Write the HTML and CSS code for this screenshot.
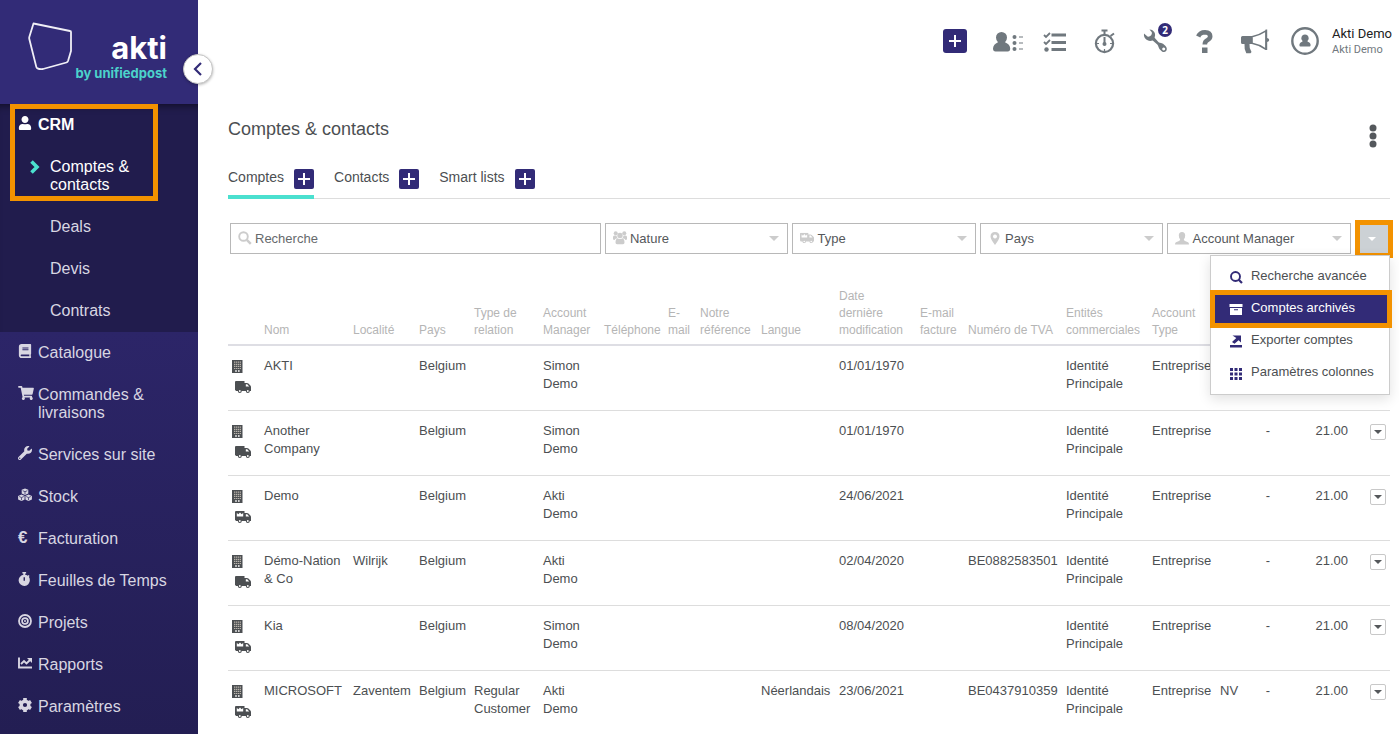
FILE: index.html
```html
<!DOCTYPE html>
<html lang="fr">
<head>
<meta charset="utf-8">
<title>Comptes &amp; contacts</title>
<link rel="stylesheet" href="styles.css">
</head>
<body>
<svg class="sprite" aria-hidden="true">
  <symbol id="building" viewBox="0 0 11 13"><path fill="currentColor" d="M0 0h10.500v13h-10.500z"/><path stroke="#b9b3aa" stroke-width="1.200" stroke-dasharray="1.300 .6" d="M2 2.200h7M2 4.300h7M2 6.400h7M2 8.500h7"/><path fill="#fff" d="M3.200 10.300h1.600v1.500H3.200zM6 10.300h1.600v1.500H6z"/></symbol>
  <symbol id="truck" viewBox="0 0 16 12"><path fill="currentColor" d="M1 0h8.500v2h2.500q.8 0 1.400.6l2 2q.6.600.6 1.400v4h-1.200a2 2 0 0 1-4 0h-4a2 2 0 0 1-4 0H.6V9H0V1q0-1 1-1z"/><path fill="#fff" d="M10.800 3.200h1.400l2 2.200h-3.400z"/><circle cx="4.800" cy="10" r=".9" fill="#fff"/><circle cx="12.800" cy="10" r=".9" fill="#fff"/></symbol>
  <symbol id="truck-crown" viewBox="0 0 16 12"><use href="#truck"/><path fill="#fff" d="M1.800 2l1.600 1.300L5 1.500l1.600 1.800L8.200 2v3.500H1.800z"/></symbol>
  <symbol id="wrench" viewBox="0 0 512 512"><path fill="currentColor" d="M507.730 109.100c-2.240-9.030-13.540-12.090-20.120-5.510l-74.360 74.360-67.880-11.310-11.310-67.880 74.360-74.360c6.620-6.620 3.430-17.900-5.660-20.160-47.380-11.740-99.550.91-136.580 37.930-39.640 39.640-50.550 97.100-34.050 147.200L18.740 402.760c-24.990 24.990-24.990 65.510 0 90.500 24.990 24.990 65.510 24.990 90.500 0l213.210-213.210c50.120 16.710 107.470 5.680 147.370-34.220 37.070-37.070 49.700-89.320 37.910-136.730zM64 472c-13.250 0-24-10.750-24-24 0-13.260 10.750-24 24-24s24 10.740 24 24c0 13.250-10.750 24-24 24z"/></symbol>
  <symbol id="plus" viewBox="0 0 20 20"><path stroke="#fff" stroke-width="2" d="M4 10h12M10 4v12"/></symbol>
</svg>

<div class="app">
  <aside class="sidebar">
    <header class="brand">
      <svg class="brand-mark" viewBox="0 0 46 50"><path fill="none" stroke="#f0eff6" stroke-width="1.800" stroke-linejoin="round" d="M5.500 1.500L42 9q1 0 1 1v19l-3 10q-.4 1-1.500 1.500L15 47q-3 .6-5.500-.6-1-.5-1.200-1.500L1.300 17q-.3-1 0-2z"/></svg>
      <div class="brand-text">
        <span class="brand-name">akti</span>
        <span class="brand-by">by unifiedpost</span>
      </div>
      <button class="collapse" aria-label="Réduire le menu"><svg viewBox="0 0 10 14"><path fill="none" stroke="#322b77" stroke-width="2.200" d="M8 1L2 7l6 6"/></svg></button>
    </header>
    <nav class="menu">
      <div class="group">
        <a class="item current" href="#"><svg class="ico" viewBox="0 0 448 512"><path fill="currentColor" d="M224 256c70.700 0 128-57.300 128-128S294.700 0 224 0 96 57.300 96 128s57.300 128 128 128zm89.600 32h-16.700c-22.200 10.200-46.900 16-72.900 16s-50.600-5.800-72.900-16h-16.700C60.200 288 0 348.200 0 422.400V464c0 26.500 21.500 48 48 48h352c26.500 0 48-21.500 48-48v-41.600c0-74.200-60.200-134.400-134.400-134.400z"/></svg>CRM</a>
        <a class="item sub active" href="#"><svg class="arrow" viewBox="0 0 10 14"><path fill="none" stroke="#4be0cf" stroke-width="3.600" d="M1.500 1.500L7 7l-5.500 5.500"/></svg>Comptes &amp; contacts</a>
        <a class="item sub" href="#">Deals</a>
        <a class="item sub" href="#">Devis</a>
        <a class="item sub" href="#">Contrats</a>
        <span class="mark mark-nav"></span>
      </div>
      <a class="item" href="#"><svg class="ico" viewBox="0 0 448 512"><path fill="currentColor" d="M448 360V24c0-13.300-10.700-24-24-24H96C43 0 0 43 0 96v320c0 53 43 96 96 96h328c13.300 0 24-10.700 24-24v-16c0-7.500-3.500-14.300-8.900-18.700-4.200-15.400-4.200-59.300 0-74.700 5.400-4.300 8.900-11.100 8.900-18.600zM128 134c0-3.300 2.700-6 6-6h212c3.300 0 6 2.700 6 6v20c0 3.300-2.700 6-6 6H134c-3.300 0-6-2.700-6-6v-20zm0 64c0-3.300 2.700-6 6-6h212c3.300 0 6 2.700 6 6v20c0 3.300-2.700 6-6 6H134c-3.300 0-6-2.700-6-6v-20zm253.400 250H96c-17.700 0-32-14.300-32-32 0-17.600 14.400-32 32-32h285.400c-1.900 17.100-1.900 46.900 0 64z"/></svg>Catalogue</a>
      <a class="item" href="#"><svg class="ico wide" viewBox="0 0 576 512"><path fill="currentColor" d="M528.120 301.319l47.273-208C578.806 78.301 567.391 64 551.990 64H159.208l-9.166-44.810C147.758 8.021 137.930 0 126.529 0H24C10.745 0 0 10.745 0 24v16c0 13.255 10.745 24 24 24h69.883l70.248 343.435C147.325 417.100 136 435.222 136 456c0 30.928 25.072 56 56 56s56-25.072 56-56c0-15.674-6.447-29.835-16.824-40h209.647C430.447 426.165 424 440.326 424 456c0 30.928 25.072 56 56 56s56-25.072 56-56c0-22.172-12.888-41.332-31.579-50.405l5.517-24.276c3.413-15.018-8.002-29.319-23.403-29.319H218.117l-6.545-32h293.145c11.206 0 20.920-7.754 23.403-18.681z"/></svg>Commandes &amp; livraisons</a>
      <a class="item" href="#"><svg class="ico"><use href="#wrench"/></svg>Services sur site</a>
      <a class="item" href="#"><svg class="ico" viewBox="0 0 14 13"><g fill="currentColor"><path d="M7 0l3.300 1.300v3.800L7 6.600 3.700 5.100V1.300z"/><path d="M3.500 5.900l3.400 1.500v3.700L3.500 12.600.1 11.100V7.400z"/><path d="M10.500 5.900l3.400 1.500v3.700l-3.400 1.500-3.400-1.500V7.400z"/></g><path fill="none" stroke="#28225f" stroke-width=".7" d="M4.700 2.200L7 3.200l2.300-1M1.200 8l2.300 1.100L5.800 8M8.200 8l2.300 1.100L12.800 8M7 3.200v2.600M3.500 9.100v2.600M10.500 9.100v2.600M7 7v5"/></svg>Stock</a>
      <a class="item" href="#"><span class="ico euro">€</span>Facturation</a>
      <a class="item" href="#"><svg class="ico" viewBox="0 0 14 15"><path fill="currentColor" d="M4.200 0h4v1.700h-1v1.200q1.500.2 2.700 1.100l.9-.9 1.200 1.200-.9.900q1.100 1.600 1.100 3.700a6 6 0 1 1-7-5.900V1.700h-1z"/><path stroke="#27215b" stroke-width="1.500" d="M6.200 5.500v4"/></svg>Feuilles de Temps</a>
      <a class="item" href="#"><svg class="ico" viewBox="0 0 14 14"><g fill="none" stroke="currentColor"><circle cx="7" cy="7" r="6" stroke-width="1.800"/><circle cx="7" cy="7" r="2.900" stroke-width="1.700"/></g><circle cx="7" cy="7" r="1" fill="currentColor"/></svg>Projets</a>
      <a class="item" href="#"><svg class="ico" viewBox="0 0 14 14"><path fill="none" stroke="currentColor" stroke-width="1.900" d="M1 1.500v10h13M3 8l3-3 2.500 2.500L12 4"/><path fill="currentColor" d="M9 2h5v5z"/></svg>Rapports</a>
      <a class="item" href="#"><svg class="ico" viewBox="0 0 14 14"><circle cx="7" cy="7" r="3.800" fill="none" stroke="currentColor" stroke-width="3.400"/><path stroke="currentColor" stroke-width="3.600" d="M7 0v3M7 11v3M1 3.500L3.500 5M10.500 9l2.500 1.500M1 10.500L3.500 9M10.500 5L13 3.500"/></svg>Paramètres</a>
    </nav>
  </aside>

  <main class="main">
    <div class="topbar">
      <button class="tool" aria-label="Ajouter"><span class="plus big"><svg><use href="#plus"/></svg></span></button>
      <button class="tool" aria-label="Contacts"><svg width="36" height="24" viewBox="0 0 36 24"><path fill="currentColor" d="M14.500 3a5.500 5.500 0 0 1 5.500 5.500q0 3-2 4.800 5 2 5.200 6.200 0 3-2.500 3H8.500q-2.500 0-2.500-3 .3-4.200 5-6.200-2-1.800-2-4.800A5.500 5.500 0 0 1 14.500 3z"/><g fill="currentColor"><circle cx="27.500" cy="8" r="2"/><circle cx="27.500" cy="14" r="2"/><circle cx="27.500" cy="20" r="2"/></g><path stroke="currentColor" stroke-width="1.200" d="M32 8h4M32 14h4M32 20h4"/></svg></button>
      <button class="tool" aria-label="Tâches"><svg width="24" height="24" viewBox="0 0 24 24"><path stroke="currentColor" stroke-width="3.200" d="M8.500 6h14.500M8.500 13.500h14.500M8.500 20.500h14.500"/><path fill="none" stroke="currentColor" stroke-width="1.800" d="M1 6l2 2 4-4M1 13l2 2 4-4"/><circle cx="3.500" cy="20.500" r="2.200" fill="currentColor"/></svg></button>
      <button class="tool" aria-label="Chronomètre"><svg width="22" height="26" viewBox="0 0 22 26"><g fill="none" stroke="currentColor"><circle cx="10.500" cy="15.500" r="8.600" stroke-width="2.200"/><path stroke-width="2" d="M7.500 2.500h6M10.500 2.500v4M16.500 8l3.500-2.500M10.500 9v7"/><path stroke-width="1.200" d="M10.500 21v3M2 15.500h3M16 15.500h3"/></g><circle cx="10.500" cy="16" r="2" fill="currentColor"/></svg></button>
      <button class="tool" aria-label="Interventions, 2"><svg width="26" height="26" viewBox="0 0 26 26"><path fill="currentColor" fill-rule="evenodd" d="M7.500 1.500q4 .3 5.300 3.600.8 2-.2 4.600l4 4.600q1 .8 2.500.8 1.800 0 4.200 2.700 2.400 2.700 1 5-2 2.300-4.600.4-2.900-2.200-3.200-4.200-.2-1.600-1.200-2.600l-4.600-4q-3.500 1.300-6.500-.8-2.700-2.200-2.200-6l3.500 3q2.300.3 3.700-1.300 1-1.500.6-3zm14.200 18a1.500 1.500 0 1 0 .01 0z"/></svg><span class="badge">2</span></button>
      <button class="tool" aria-label="Aide"><svg width="18" height="24" viewBox="0 0 18 24"><path fill="none" stroke="currentColor" stroke-width="4.600" d="M2.200 7.500Q4 3.300 9 3.300q5.200.2 5.200 4 0 2.300-2.600 3.700-2.800 1.300-2.800 4.500"/><path fill="currentColor" d="M6 18.500h5.500V24H6z"/></svg></button>
      <button class="tool" aria-label="Annonces"><svg width="32" height="26" viewBox="0 0 32 26"><path fill="currentColor" d="M3.500 8H13v8h-2.500q-.5 4 2 8l-1 1.200H7.300Q5 21 5.500 16h-2Q2 16 2 14.500v-5Q2 8 3.500 8z"/><path fill="none" stroke="currentColor" stroke-width="1.600" stroke-linejoin="round" d="M13 8.800q7-1.500 14-6v18.500q-7-4.800-14-6z"/><path fill="currentColor" d="M26.500 1.500h1.700V10q2 .5 2 2t-2 2v8h-1.700z"/></svg></button>
      <button class="tool" aria-label="Profil"><svg width="30" height="30" viewBox="0 0 30 30"><circle cx="15" cy="15" r="12.700" fill="none" stroke="currentColor" stroke-width="2.400"/><path fill="currentColor" d="M15 8.500a3.600 3.600 0 0 1 2.600 6.200v1q3 .8 3 3.300 0 1.500-1 1.500h-9.200q-1 0-1-1.500 0-2.500 3-3.300v-1A3.600 3.600 0 0 1 15 8.500z"/></svg></button>
      <div class="user"><span class="user-name">Akti Demo</span><span class="user-org">Akti Demo</span></div>
    </div>

    <div class="heading">
      <h1>Comptes &amp; contacts</h1>
      <button class="kebab" aria-label="Plus d'options"><svg viewBox="0 0 8 24"><g fill="#54585c"><circle cx="4" cy="4" r="3.500"/><circle cx="4" cy="12" r="3.500"/><circle cx="4" cy="20" r="3.500"/></g></svg></button>
    </div>

    <div class="tabs">
      <div class="tab selected"><a href="#">Comptes</a><button class="plus" aria-label="Ajouter un compte"><svg><use href="#plus"/></svg></button></div>
      <div class="tab"><a href="#">Contacts</a><button class="plus" aria-label="Ajouter un contact"><svg><use href="#plus"/></svg></button></div>
      <div class="tab"><a href="#">Smart lists</a><button class="plus" aria-label="Ajouter une liste"><svg><use href="#plus"/></svg></button></div>
    </div>

    <form class="filters">
      <div class="field"><svg viewBox="0 0 14 14"><circle cx="5.500" cy="5.500" r="4.300" fill="none" stroke="currentColor" stroke-width="1.900"/><path stroke="currentColor" stroke-width="2.400" d="M8.800 8.800l4 4"/></svg><input type="text" placeholder="Recherche" aria-label="Recherche"></div>
      <div class="field drop"><svg viewBox="0 0 14 14"><g fill="currentColor"><circle cx="2.700" cy="2.300" r="2"/><circle cx="11.300" cy="2.300" r="2"/><circle cx="7" cy="4.500" r="2.700"/><path d="M0 8V6q0-1.500 1.500-1.500h2q.1 2 1.500 3H3Q2 8 1.500 9 0 9 0 8zM14 8V6q0-1.500-1.500-1.500h-2Q10.400 6.500 9 7.500h2q1 .500 1.500 1.500Q14 9 14 8z"/><path d="M2.500 11.500q0-4 2.500-4 2 1.200 4 0 2.500 0 2.500 4 0 1.700-1.500 1.700H4q-1.500 0-1.500-1.700z"/></g></svg><select aria-label="Nature"><option>Nature</option></select></div>
      <div class="field drop"><svg><use href="#truck-crown"/></svg><select aria-label="Type"><option>Type</option></select></div>
      <div class="field drop"><svg viewBox="0 0 14 14"><path fill="currentColor" fill-rule="evenodd" d="M7 1q4.500.2 4.500 4.500Q11.500 8 7 14 2.500 8 2.500 5.500 2.500 1.200 7 1zm0 2.600a2 2 0 1 0 .01 0z"/></svg><select aria-label="Pays"><option>Pays</option></select></div>
      <div class="field drop"><svg viewBox="0 0 14 14"><path fill="currentColor" d="M7 1q3.200 0 3.200 3.500Q10.200 7 8.800 8.300q0 1.200 1.200 1.700l3 1.200q1 .5 1 2.300H0q0-1.800 1-2.300L4 10q1.200-.5 1.200-1.700Q3.800 7 3.800 4.500 3.800 1 7 1z"/></svg><select aria-label="Account Manager"><option>Account Manager</option></select></div>
      <div class="more">
        <button type="button" class="more-btn" aria-label="Plus d'actions"><span class="caret"></span></button>
        <span class="mark mark-more"></span>
        <div class="popup">
          <a href="#"><svg viewBox="0 0 14 14"><circle cx="6.500" cy="6.500" r="4.500" fill="none" stroke="currentColor" stroke-width="1.900"/><path stroke="currentColor" stroke-width="2.200" d="M9.500 9.500l3.500 3.500"/></svg>Recherche avancée</a>
          <a href="#" class="hot"><svg viewBox="0 0 14 14"><path fill="currentColor" fill-rule="evenodd" d="M.5 2h13v3H.5zM1 6h12v7H1zm4 1.200v1.100h4V7.200z"/></svg>Comptes archivés<span class="mark mark-item"></span></a>
          <a href="#"><svg viewBox="0 0 14 14"><path fill="currentColor" d="M1 11h12v2.500H1zM3.500 1.500H12v7L9.600 6.200 5.500 9.800 3 8l4.300-4z"/></svg>Exporter comptes</a>
          <a href="#"><svg viewBox="0 0 14 14"><path fill="none" stroke="currentColor" stroke-width="3" stroke-dasharray="3 1.500" d="M1 3.500h12M1 8h12M1 12.500h12"/></svg>Paramètres colonnes</a>
        </div>
      </div>
    </form>

    <table class="grid">
      <colgroup><col class="c32"><col class="c89"><col class="c66"><col class="c55"><col class="c69"><col class="c61"><col class="c64"><col class="c32"><col class="c61"><col class="c78"><col class="c81"><col class="c48"><col class="c98"><col class="c86"><col class="c68"><col class="c44"><col class="c40"><col class="c52"><col class="c38"></colgroup>
      <thead><tr><th></th><th>Nom</th><th>Localité</th><th>Pays</th><th>Type de relation</th><th>Account Manager</th><th>Téléphone</th><th>E-mail</th><th>Notre référence</th><th>Langue</th><th>Date<br>dernière modification</th><th>E-mail facture</th><th>Numéro de TVA</th><th>Entités commerciales</th><th>Account Type</th><th></th><th></th><th></th><th></th></tr></thead>
      <tbody>
        <tr><td><span class="kinds"><svg class="bld"><use href="#building"/></svg><svg class="trk"><use href="#truck"/></svg></span></td><td>AKTI</td><td></td><td>Belgium</td><td></td><td>Simon Demo</td><td></td><td></td><td></td><td></td><td>01/01/1970</td><td></td><td></td><td>Identité Principale</td><td>Entreprise</td><td></td><td></td><td></td><td></td></tr>
        <tr><td><span class="kinds"><svg class="bld"><use href="#building"/></svg><svg class="trk"><use href="#truck"/></svg></span></td><td>Another Company</td><td></td><td>Belgium</td><td></td><td>Simon Demo</td><td></td><td></td><td></td><td></td><td>01/01/1970</td><td></td><td></td><td>Identité Principale</td><td>Entreprise</td><td></td><td class="dash">-</td><td class="num">21.00</td><td class="act"><button class="row-btn" aria-label="Actions"><span class="caret"></span></button></td></tr>
        <tr><td><span class="kinds"><svg class="bld"><use href="#building"/></svg><svg class="trk"><use href="#truck-crown"/></svg></span></td><td>Demo</td><td></td><td>Belgium</td><td></td><td>Akti<br>Demo</td><td></td><td></td><td></td><td></td><td>24/06/2021</td><td></td><td></td><td>Identité Principale</td><td>Entreprise</td><td></td><td class="dash">-</td><td class="num">21.00</td><td class="act"><button class="row-btn" aria-label="Actions"><span class="caret"></span></button></td></tr>
        <tr><td><span class="kinds"><svg class="bld"><use href="#building"/></svg><svg class="trk"><use href="#truck"/></svg></span></td><td>Démo-Nation &amp; Co</td><td>Wilrijk</td><td>Belgium</td><td></td><td>Akti<br>Demo</td><td></td><td></td><td></td><td></td><td>02/04/2020</td><td></td><td>BE0882583501</td><td>Identité Principale</td><td>Entreprise</td><td></td><td class="dash">-</td><td class="num">21.00</td><td class="act"><button class="row-btn" aria-label="Actions"><span class="caret"></span></button></td></tr>
        <tr><td><span class="kinds"><svg class="bld"><use href="#building"/></svg><svg class="trk"><use href="#truck-crown"/></svg></span></td><td>Kia</td><td></td><td>Belgium</td><td></td><td>Simon Demo</td><td></td><td></td><td></td><td></td><td>08/04/2020</td><td></td><td></td><td>Identité Principale</td><td>Entreprise</td><td></td><td class="dash">-</td><td class="num">21.00</td><td class="act"><button class="row-btn" aria-label="Actions"><span class="caret"></span></button></td></tr>
        <tr><td><span class="kinds"><svg class="bld"><use href="#building"/></svg><svg class="trk"><use href="#truck-crown"/></svg></span></td><td>MICROSOFT</td><td>Zaventem</td><td>Belgium</td><td>Regular Customer</td><td>Akti<br>Demo</td><td></td><td></td><td></td><td>Néerlandais</td><td>23/06/2021</td><td></td><td>BE0437910359</td><td>Identité Principale</td><td>Entreprise</td><td>NV</td><td class="dash">-</td><td class="num">21.00</td><td class="act"><button class="row-btn" aria-label="Actions"><span class="caret"></span></button></td></tr>
      </tbody>
    </table>
  </main>
</div>
</body>
</html>
```
FILE: styles.css
```css
* { box-sizing: border-box; }
body { margin: 0; height: 100vh; overflow: hidden; background: #fff; color: #4c4f52; font: 13px/18px "Liberation Sans", Arial, sans-serif; }
button { border: 0; padding: 0; background: none; font: inherit; color: inherit; }
a { color: inherit; text-decoration: none; }
svg { display: block; }
.sprite { position: absolute; width: 0; height: 0; }
.app { display: flex; height: 100%; }

/* Sidebar */
.sidebar { width: 198px; flex: none; display: flex; flex-direction: column; background: #2c2568; }
.brand { position: relative; z-index: 1; display: flex; height: 104px; padding: 22px 31px 0 28px; background: #322b77; }
.brand-mark { width: 46px; height: 50px; flex: none; }
.brand-text { flex: 1; display: flex; flex-direction: column; align-items: flex-end; padding-top: 9px; font-family: Inter, sans-serif; white-space: nowrap; }
.brand-name { font-size: 31px; line-height: 34px; font-weight: 700; color: #fff; }
.brand-by { font-size: 13px; line-height: 16px; font-weight: 700; color: #4cd3cb; }
.collapse { position: absolute; right: -15px; top: 54px; width: 30px; height: 30px; display: grid; place-items: center; border: 1px solid #c4c4c4; border-radius: 50%; background: #fff; box-shadow: 0 1px 3px rgba(0, 0, 0, .3); }
.collapse svg { width: 10px; height: 14px; }
.menu { flex: 1; background: linear-gradient(#211c4e 0, #2c2568 228px, #231e53 100%); font-size: 16px; color: #d8d6e2; }
.group { position: relative; background: #211c4d; box-shadow: inset 0 8px 8px -7px rgba(0, 0, 0, .6); }
.item { display: flex; align-items: flex-start; padding: 12px 20px 12px 18px; }
.ico { width: 14px; height: 14px; flex: none; margin-right: 6px; }
.ico.wide { width: 16px; margin-right: 4px; }
.euro { font-weight: 700; font-size: 17px; line-height: 16px; }
.current { font-weight: 700; color: #fff; }
.sub { padding-left: 50px; position: relative; }
.active { color: #fff; }
.arrow { position: absolute; left: 30px; top: 14px; width: 10px; height: 14px; }

/* Highlight frames */
.mark { position: absolute; border: 5px solid #f39200; pointer-events: none; }
.mark-nav { left: 10px; top: 0; width: 148px; height: 97px; z-index: 2; }
.mark-more { inset: -3px -3px -4px 0; }
.mark-item { inset: -5px -4px -5px -1px; }

/* Main */
.main { flex: 1; min-width: 0; padding: 0 9px 0 30px; }
.topbar { display: flex; justify-content: flex-end; align-items: center; height: 82px; margin-right: -2px; color: #70787e; }
.tool { position: relative; width: 50px; height: 50px; display: grid; place-items: center; }
.badge { position: absolute; right: 8px; top: 7px; width: 14px; height: 14px; border-radius: 50%; background: #322b77; color: #fff; font: 700 10px/14px "Open Sans", sans-serif; text-align: center; }
.user { display: flex; flex-direction: column; padding-left: 2px; font-family: Roboto, sans-serif; white-space: nowrap; }
.user-name { font-size: 13px; line-height: 17px; color: #222; }
.user-org { font-size: 11px; line-height: 16px; }
.plus { display: block; width: 20px; height: 20px; border-radius: 2px; background: #322b77; }
.plus svg { width: 20px; height: 20px; }
.plus.big { width: 24px; height: 24px; padding: 2px; border-radius: 3px; }
.heading { display: flex; justify-content: space-between; align-items: center; height: 30px; margin-top: 36px; padding-right: 13px; }
.heading h1 { margin: 0; padding-bottom: 8px; font-size: 18px; line-height: 22px; font-weight: 400; }
.kebab svg { width: 8px; height: 24px; }
.kebab { margin-top: 6px; }
.tabs { display: flex; gap: 20px; margin-top: 21px; border-bottom: 1px solid #ddd; }
.tab { display: flex; gap: 10px; height: 30px; margin-bottom: -1px; font-size: 14px; line-height: 16px; }
.selected { border-bottom: 4px solid #4be0cf; }
.filters { display: grid; grid-template-columns: 372fr repeat(4, 184fr) 35px; gap: 4px; margin: 24px 0 34px 2px; }
.field { position: relative; color: #ccc; }
.field > svg { position: absolute; left: 8px; top: 8px; width: 14px; height: 14px; pointer-events: none; }
.field input, .field select { display: block; width: 100%; height: 31px; padding: 0 24px; border: 1px solid #b8b8b8; border-radius: 0; background: #fff; color: #55585b; font: inherit; appearance: none; outline: 0; }
.field input::placeholder { color: #66696c; opacity: 1; }
.drop::after { content: ""; position: absolute; right: 9px; top: 13px; border: 5px solid transparent; border-top-color: #ccc; border-bottom: 0; }
.more { position: relative; }
.more-btn { display: grid; place-items: center; width: 100%; height: 31px; background: #ccd1d5; }
.caret { border: 4px solid transparent; border-top-color: #fff; border-bottom: 0; }
.popup { position: absolute; z-index: 3; right: 0; top: 32px; width: 180px; padding: 7px 1px 7px 0; border: 1px solid #ccc; background: #fff; box-shadow: 0 4px 12px rgba(0, 0, 0, .12); white-space: nowrap; }
.popup a { position: relative; display: flex; align-items: flex-start; gap: 8px; height: 28px; margin-bottom: 4px; padding-left: 18px; line-height: 26px; }
.popup a:last-child { margin-bottom: 0; }
.popup svg { width: 14px; height: 14px; margin-top: 7px; color: #322b77; }
.popup .hot { background: #322b77; color: #fff; }
.popup .hot svg { color: #fff; }

/* Accounts table */
.grid { width: 100%; table-layout: fixed; border-collapse: separate; border-spacing: 0; }
.grid th { padding: 0 4px 5px; border-bottom: 2px solid #dedee4; font-size: 12px; line-height: 17px; font-weight: 400; text-align: left; vertical-align: bottom; color: #b5b5b5; }
.grid td { padding: 11px 4px 17px; border-bottom: 1px solid #ddd; vertical-align: top; }
.kinds { display: flex; flex-direction: column; gap: 8px; padding-top: 3px; }
.bld { width: 11px; height: 13px; }
.trk { width: 16px; height: 12px; margin-left: 3px; }
.grid .dash { text-align: center; padding-right: 28px; }
.grid .num, .grid .act { text-align: right; }
.row-btn { display: inline-grid; place-items: center; width: 16px; height: 16px; margin-top: 2px; border: 1px solid #c8c8c8; border-radius: 2px; vertical-align: top; }
.row-btn .caret { border-top-color: #55585b; }
.c32 { width: 32px; }
.c38 { width: 38px; }
.c40 { width: 40px; }
.c44 { width: 44px; }
.c48 { width: 48px; }
.c52 { width: 52px; }
.c55 { width: 55px; }
.c61 { width: 61px; }
.c64 { width: 64px; }
.c66 { width: 66px; }
.c68 { width: 68px; }
.c69 { width: 69px; }
.c78 { width: 78px; }
.c81 { width: 81px; }
.c86 { width: 86px; }
.c89 { width: 89px; }
.c98 { width: 98px; }
```
